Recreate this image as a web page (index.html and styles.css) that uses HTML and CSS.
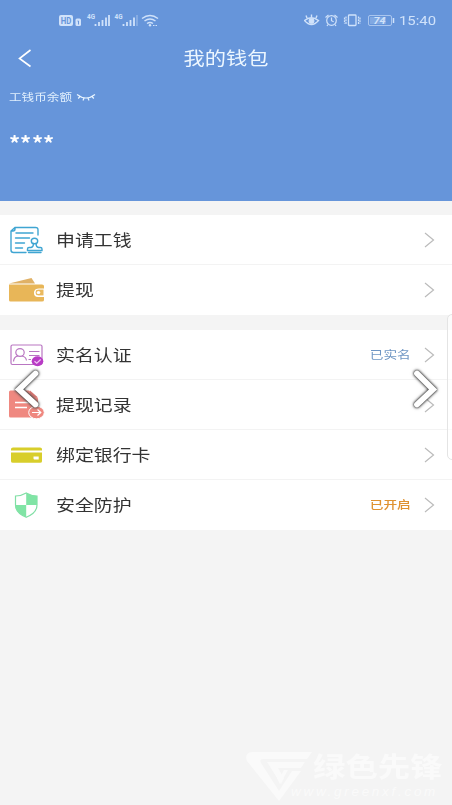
FILE: index.html
```html
<!DOCTYPE html>
<html lang="zh-CN">
<head>
<meta charset="utf-8">
<title>我的钱包</title>
<link rel="stylesheet" href="styles.css">
</head>
<body>
<header class="header">
  <div class="statusbar">
    <svg class="signals" width="102" height="20" viewBox="0 0 102 20">
      <rect x="0" y="5" width="14" height="11" rx="2" fill="currentColor"/>
      <text class="hd" x="1.7" y="13.600" textLength="10.600" lengthAdjust="spacingAndGlyphs">HD</text>
      <rect x="16.500" y="8.500" width="5.500" height="7.500" rx="1.500" fill="currentColor"/>
      <path d="M18.500 11h1v3.500" stroke="#6695da" fill="none"/>
      <text class="net" x="28" y="9" textLength="8" lengthAdjust="spacingAndGlyphs">4G</text>
      <path d="M36.500 16v-2M40 16v-4M43.500 16v-6M47 16v-8.500M50 16v-11M64.500 16v-2M68 16v-4M71.500 16v-6M75 16v-8.500" stroke="currentColor" stroke-width="1.800"/>
      <text class="net" x="55.500" y="9" textLength="8" lengthAdjust="spacingAndGlyphs">4G</text>
      <path d="M78 16V5" stroke="currentColor" stroke-width="1.500" opacity=".4"/>
      <path d="M83 8.500q8-6 16 0M85.500 11q5.500-4 11 0M88 13.500q3-2 6 0" stroke="currentColor" stroke-width="1.500" fill="none"/>
      <circle cx="91" cy="15.300" r="1.200" fill="currentColor"/><path d="M94 15.500h4" stroke="currentColor" stroke-dasharray="1.500 1"/>
    </svg>
    <svg class="states" width="91" height="20" viewBox="0 0 91 20" fill="none" stroke="currentColor">
      <path d="M.5 10.500q6.800-5.500 14 0-7 8-14 0zM7.500 7V4.500M3 8L2 5.500M12 8l1-2.500" stroke-width="1.400"/><circle cx="7.500" cy="11" r="2.500" fill="currentColor"/>
      <circle cx="27.500" cy="10.500" r="4.800" stroke-width="1.200"/><path d="M27.500 7.500v3.200l2.200 1M21.500 7.500l3-2.500M33.500 7.500l-3-2.500M24 14.500l-1 1.500M31 14.500l1 1.500" stroke-width="1.200"/>
      <rect x="44.500" y="5" width="7.500" height="10.500" rx=".8" stroke-width="1.300"/><path d="M42 6.500v8M54.500 6.500v8M40.500 7.500v6M56 7.500v6" stroke-dasharray="2 .7" stroke-width="1.200"/>
      <rect x="64.500" y="5.500" width="23" height="10" rx="1.500" stroke-width=".9" opacity=".7"/><rect x="66" y="7" width="16" height="7" fill="currentColor" stroke="none" opacity=".25"/><path d="M89.500 8v5" stroke-width="1.500"/>
      <text class="battery" x="69.500" y="14" textLength="12" lengthAdjust="spacingAndGlyphs">74</text>
    </svg>
    <span class="time wide">15:40</span>
  </div>
  <div class="titlebar">
    <svg class="back" width="14" height="20" viewBox="0 0 14 20"><path d="M12.500 1L1.500 9.500l11 8"/></svg>
    <h1 class="title wide">我的钱包</h1>
  </div>
  <div class="balance-label">
    <span class="wide label-text">工钱币余额</span>
    <svg class="eye" width="20" height="9" viewBox="0 0 20 9"><path d="M1 1.500q9 7 18 0M4 3.500L2.200 5.500M8 5L7 7.500M12 5l1 2.500M16 3.500l1.800 2"/></svg>
  </div>
  <div class="masked"><span>*</span><span>*</span><span>*</span><span>*</span></div>
</header>

<main>
  <section class="group">
    <div class="row">
      <svg class="icon" width="38" height="32" viewBox="0 0 38 32" fill="none" stroke="#3fa5d2" stroke-width="1.400" stroke-linecap="round">
        <path d="M30 10V5q0-2.500-2.500-2.500H7L3 6v19q0 2.500 2.500 2.500H18M7 2.500V4q0 2-2 2H3M8 8H25M7.500 13h14M7.500 18h9M7.500 23h7"/>
        <ellipse cx="26.500" cy="16" rx="3.200" ry="2.800"/><path d="M25.500 18.500q0 3.500-2.500 4h-2q-1.500 0-1.500 1.500v1.500H34V24q0-1.500-1.500-1.500h-2q-2.500-.5-2.500-4M20.500 27.500H33"/>
      </svg>
      <span class="name wide">申请工钱</span>
      <svg class="arrow" width="11" height="16" viewBox="0 0 11 16"><path d="M1 1l8.500 7L1 15"/></svg>
    </div>
    <div class="row">
      <svg class="icon" width="38" height="32" viewBox="0 0 38 32">
        <path d="M1 8.500L23.500 3 27 8.500z" fill="#e0b166"/><path d="M1 9.500h33q2 0 2 1.500v3h-6q-4 0-4 4t4 4h6v3q0 1.500-2 1.500H2.500Q1 26.500 1 25z" fill="#e8b658"/><path d="M35.500 14.500h-5q-3 0-3 3t3 3h5z" fill="#eab95e"/><path d="M36 13.800h-5.500q-3.700 0-3.700 3.700t3.700 3.700H36" fill="none" stroke="#fff" stroke-width=".7"/><ellipse cx="30.500" cy="17.500" rx="1.800" ry="1.500" fill="#fff"/>
      </svg>
      <span class="name wide">提现</span>
      <svg class="arrow" width="11" height="16" viewBox="0 0 11 16"><path d="M1 1l8.500 7L1 15"/></svg>
    </div>
  </section>

  <section class="group">
    <div class="row">
      <svg class="icon" width="38" height="32" viewBox="0 0 38 32" fill="none" stroke="#b976c2" stroke-width="1.200">
        <rect x="3" y="5" width="31" height="19.500" rx="1.500"/><ellipse cx="12" cy="12.500" rx="4.200" ry="3.800"/><path d="M5.500 21.500q.5-5 4.500-5.500M14 16q4 .8 4.500 4.500M21 11.500h10.500M21 15.500h10.500M20.500 19.500h2.500"/><ellipse cx="29.500" cy="21.300" rx="5.800" ry="5" fill="#b83bc5" stroke="none"/><path d="M26.500 21.300l2.200 2 4-3.800" stroke="#efc5f2"/>
      </svg>
      <span class="name wide">实名认证</span>
      <span class="status wide verified">已实名</span>
      <svg class="arrow" width="11" height="16" viewBox="0 0 11 16"><path d="M1 1l8.500 7L1 15"/></svg>
    </div>
    <div class="row">
      <svg class="icon" width="38" height="32" viewBox="0 0 38 32">
        <path d="M2.500 .5H21l9 8v19H2.500Q1 27.500 1 26V2Q1 .5 2.500 .5z" fill="#ef8880"/><path d="M22 .5v7h8z" fill="#d97570"/><path d="M7 12.500h16M7 17.500h12" stroke="#fff" stroke-width="1.400"/><ellipse cx="28.500" cy="22.500" rx="7.800" ry="6.300" fill="#ef8880" stroke="#fff"/><path d="M24 22.500h8.500M29.500 19.500l3.300 3-3.300 3" fill="none" stroke="#fff" stroke-width="1.200"/>
      </svg>
      <span class="name wide">提现记录</span>
      <svg class="arrow" width="11" height="16" viewBox="0 0 11 16"><path d="M1 1l8.500 7L1 15"/></svg>
    </div>
    <div class="row">
      <svg class="icon" width="38" height="32" viewBox="0 0 38 32">
        <path d="M3 10.500V9Q3 7.500 5 7.500h27q2 0 2 1.500v1.500zM3 12.500h31v8.800q0 1.500-2 1.500H5q-2 0-2-1.500z" fill="#d8ce2b"/><path d="M25.500 16.500h5.200v3h-4.200q-1 0-1-1z" fill="#fff"/>
      </svg>
      <span class="name wide">绑定银行卡</span>
      <svg class="arrow" width="11" height="16" viewBox="0 0 11 16"><path d="M1 1l8.500 7L1 15"/></svg>
    </div>
    <div class="row">
      <svg class="icon" width="38" height="32" viewBox="0 0 38 32">
        <path d="M18.200 3q-5 3-10.700 3v9q0 7.800 10.700 12.300Q29 22.800 29 15V6q-5.800 0-10.800-3z" fill="#fff" stroke="#80dfa5" stroke-width="1.200"/><path d="M18.200 3Q23.200 6 29 6v9H18.200zM18.200 15v12.300Q7.500 22.800 7.500 15z" fill="#80e4a5"/>
      </svg>
      <span class="name wide">安全防护</span>
      <span class="status wide enabled">已开启</span>
      <svg class="arrow" width="11" height="16" viewBox="0 0 11 16"><path d="M1 1l8.500 7L1 15"/></svg>
    </div>
  </section>
</main>

<div class="edge-panel"></div>
<svg class="pager pager-prev" width="36" height="48" viewBox="0 0 36 48"><path d="M25.500 8.500L9 24.500l16.500 15"/></svg>
<svg class="pager pager-next" width="36" height="48" viewBox="0 0 36 48"><path d="M10 8.500l16 16-16 15"/></svg>

<div class="watermark">
  <svg width="68" height="52" viewBox="0 0 68 52"><path d="M7 2h60l-5 7H18q-4 0-2 4l18 28 13-20h9L34 51 2 11Q-1 3 7 2z"/><path d="M22 12h38l-4 6H33l6 10-3 6z"/><path d="M28 20l7 14 8-14h-4l-4 8-3-8z"/></svg>
  <div class="watermark-text">
    <span class="brand">绿色先锋</span>
    <span class="site">www.greenxf.com</span>
  </div>
</div>
</body>
</html>
```
FILE: styles.css
```css
* { box-sizing: border-box; }
body {
  margin: 0;
  position: relative;
  height: 805px;
  overflow: hidden;
  background: #f4f4f4;
  color: #333;
  font-family: Roboto, "Noto Sans CJK SC", sans-serif;
}
svg { display: block; flex: none; }
.wide { display: block; white-space: nowrap; transform: scaleX(1.18); transform-origin: left center; }
.header { height: 201px; background: #6695da; color: #fff; }
.statusbar {
  height: 40px;
  padding: 10px 16px 0 59px;
  display: flex;
  align-items: flex-start;
  color: #d0e2fa;
}
.states { margin-left: auto; margin-right: 4px; }
.time { width: 37px; font-size: 13.5px; line-height: 21px; transform: scaleX(1.1); }
.hd { font: bold 9px Roboto, sans-serif; fill: #6695da; }
.net { font: bold 7px Roboto, sans-serif; fill: currentColor; }
.battery { font: italic bold 9.5px Roboto, sans-serif; fill: currentColor; stroke: none; }
.titlebar {
  height: 38px;
  padding: 0 17px;
  display: grid;
  grid-template-columns: 1fr auto 1fr;
  align-items: center;
}
.back { fill: none; stroke: #fff; stroke-width: 1.6; margin-left: 1px; }
.title { margin: 0; font-size: 18px; font-weight: 400; line-height: 26px; transform-origin: center; color: #edf7ff; }
.balance-label { height: 38px; padding: 1px 0 0 9px; display: flex; align-items: center; }
.label-text { width: 67px; font-size: 10.7px; line-height: 16px; color: #e1effd; }
.eye { fill: none; stroke: #e9f5ff; stroke-width: 1.2; margin-top: -1px; }
.masked { display: flex; padding: 11px 0 0 9px; font: bold 20px/32px "Noto Sans CJK SC", sans-serif; }
.masked span { width: 11.4px; transform: scaleX(1.1); transform-origin: left; }
.group { margin-top: 14px; background: #fff; }
.group + .group { margin-top: 15px; }
.row {
  height: 50px;
  padding: 1px 17px 0 8px;
  display: flex;
  align-items: center;
  border-bottom: 1px solid #f3f3f3;
}
.row:last-child { border-bottom-color: #fff; }
.icon { margin-top: 2px; }
.name { margin-left: 10px; padding-top: 1px; font-size: 16px; line-height: 24px; }
.status { margin-left: auto; font-size: 11.6px; line-height: 18px; transform-origin: right center; }
.arrow { margin-left: auto; fill: none; stroke: #bbb; stroke-width: 1.2; }
.status + .arrow { margin-left: 13px; }
.verified { color: #6f96c4; }
.enabled { color: #df9231; font-weight: 500; }
.edge-panel {
  position: absolute;
  right: -8px;
  top: 314px;
  width: 13px;
  height: 146px;
  border: 1px solid #e4e4e4;
  border-radius: 5px;
  background: rgba(255, 255, 255, .6);
}
.pager {
  position: absolute;
  top: 365px;
  fill: none;
  stroke: #fff;
  stroke-width: 5.8;
  stroke-linecap: round;
  filter: drop-shadow(0 0 .8px #222) drop-shadow(0 0 1.5px #666);
}
.pager-prev { left: 10px; }
.pager-next { left: 407px; }
.watermark {
  position: absolute;
  left: 245px;
  top: 750px;
  display: flex;
  fill: #fafafa;
  color: #fafafa;
}
.watermark-text { display: flex; flex-direction: column; }
.brand { height: 34px; font: bold 27px/32px "Noto Sans CJK SC", sans-serif; transform: scaleX(1.2); transform-origin: left; }
.site { margin-left: -22px; font: italic 13.5px/16px "Liberation Sans", sans-serif; letter-spacing: 2.7px; }
```
